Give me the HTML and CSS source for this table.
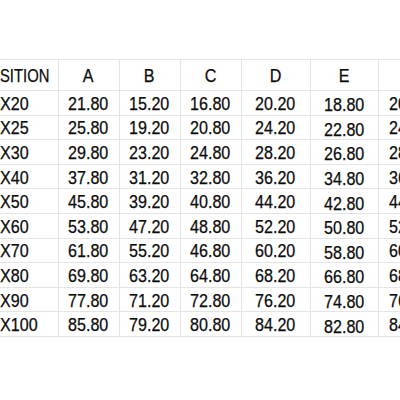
FILE: index.html
```html
<!DOCTYPE html>
<html>
<head>
<meta charset="utf-8">
<link rel="stylesheet" href="styles.css">
</head>
<body>
<table class="sheet">
  <colgroup>
    <col class="c0"><col class="c1"><col class="c2"><col class="c3"><col class="c4"><col class="c5"><col class="c6">
  </colgroup>
  <thead>
    <tr><th class="pos"><span class="t">SITION</span></th><th><span class="t">A</span></th><th><span class="t">B</span></th><th><span class="t">C</span></th><th><span class="t">D</span></th><th class="e"><span class="t">E</span></th><th><span class="t">F</span></th></tr>
  </thead>
  <tbody>
    <tr><td class="pos"><span class="t">X20</span></td><td><span class="t">21.80</span></td><td><span class="t">15.20</span></td><td><span class="t">16.80</span></td><td><span class="t">20.20</span></td><td class="e"><span class="t">18.80</span></td><td><span class="t">20.20</span></td></tr>
    <tr><td class="pos"><span class="t">X25</span></td><td><span class="t">25.80</span></td><td><span class="t">19.20</span></td><td><span class="t">20.80</span></td><td><span class="t">24.20</span></td><td class="e"><span class="t">22.80</span></td><td><span class="t">24.20</span></td></tr>
    <tr><td class="pos"><span class="t">X30</span></td><td><span class="t">29.80</span></td><td><span class="t">23.20</span></td><td><span class="t">24.80</span></td><td><span class="t">28.20</span></td><td class="e"><span class="t">26.80</span></td><td><span class="t">28.20</span></td></tr>
    <tr><td class="pos"><span class="t">X40</span></td><td><span class="t">37.80</span></td><td><span class="t">31.20</span></td><td><span class="t">32.80</span></td><td><span class="t">36.20</span></td><td class="e"><span class="t">34.80</span></td><td><span class="t">36.20</span></td></tr>
    <tr><td class="pos"><span class="t">X50</span></td><td><span class="t">45.80</span></td><td><span class="t">39.20</span></td><td><span class="t">40.80</span></td><td><span class="t">44.20</span></td><td class="e"><span class="t">42.80</span></td><td><span class="t">44.20</span></td></tr>
    <tr><td class="pos"><span class="t">X60</span></td><td><span class="t">53.80</span></td><td><span class="t">47.20</span></td><td><span class="t">48.80</span></td><td><span class="t">52.20</span></td><td class="e"><span class="t">50.80</span></td><td><span class="t">52.20</span></td></tr>
    <tr><td class="pos"><span class="t">X70</span></td><td><span class="t">61.80</span></td><td><span class="t">55.20</span></td><td><span class="t">46.80</span></td><td><span class="t">60.20</span></td><td class="e"><span class="t">58.80</span></td><td><span class="t">60.20</span></td></tr>
    <tr><td class="pos"><span class="t">X80</span></td><td><span class="t">69.80</span></td><td><span class="t">63.20</span></td><td><span class="t">64.80</span></td><td><span class="t">68.20</span></td><td class="e"><span class="t">66.80</span></td><td><span class="t">68.20</span></td></tr>
    <tr><td class="pos"><span class="t">X90</span></td><td><span class="t">77.80</span></td><td><span class="t">71.20</span></td><td><span class="t">72.80</span></td><td><span class="t">76.20</span></td><td class="e"><span class="t">74.80</span></td><td><span class="t">76.20</span></td></tr>
    <tr><td class="pos"><span class="t">X100</span></td><td><span class="t">85.80</span></td><td><span class="t">79.20</span></td><td><span class="t">80.80</span></td><td><span class="t">84.20</span></td><td class="e"><span class="t">82.80</span></td><td><span class="t">84.20</span></td></tr>
  </tbody>
</table>
</body>
</html>
```
FILE: styles.css
```css
html, body {
  margin: 0;
  padding: 0;
  background: #ffffff;
  overflow: hidden;
  width: 400px;
  height: 400px;
}
.sheet {
  margin-top: 59px;
  border-collapse: collapse;
  table-layout: fixed;
  width: 440px;
  font-family: "Liberation Sans", Arial, sans-serif;
  font-size: 18.5px;
  line-height: 18px;
  color: #0a0a0a;
}
.c0 { width: 58px; }
.c1 { width: 61px; }
.c2 { width: 61px; }
.c3 { width: 61px; }
.c4 { width: 69px; }
.c5 { width: 68px; }
.c6 { width: 62px; }
.sheet thead tr { height: 31px; }
.sheet tbody tr { height: 24.6px; }
.sheet th, .sheet td {
  border: 1px solid #e4e4e4;
  text-align: center;
  vertical-align: middle;
  font-weight: normal;
  padding: 2px 0 0 0;
  white-space: nowrap;
  overflow: hidden;
}
.t {
  display: inline-block;
  transform: scaleX(0.87);
  -webkit-text-stroke: 0.25px #0a0a0a;
}
.sheet .pos {
  text-align: left;
  border-left: none;
}
.sheet .pos .t {
  transform-origin: left center;
}
.sheet th.pos .t {
  transform: scaleX(0.8);
}
.sheet td.e {
  padding-top: 5px;
}
```
